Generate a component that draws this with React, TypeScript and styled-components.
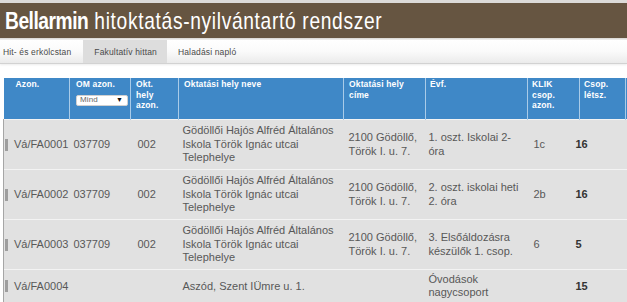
import React from "react";
import styled, { createGlobalStyle } from "styled-components";

const GlobalStyle = createGlobalStyle`
  html, body { margin: 0; padding: 0; background: #ffffff; }
  body { overflow: hidden; font-family: "Liberation Sans", Arial, sans-serif; }
`;

const Page = styled.div`
  width: 627px;
  height: 302px;
  overflow: hidden;
  background: #ffffff;
`;

const TopStrip = styled.div`
  height: 3px;
  background: #dcdad8;
`;

const TitleBar = styled.header`
  height: 35px;
  background: #665541;
  color: #ffffff;
  display: flex;
  align-items: center;
  padding-left: 5px;
  white-space: nowrap;
  font-family: "Liberation Sans", Arial, sans-serif;
`;

const TitleText = styled.h1`
  margin: 0;
  font-size: 24px;
  font-weight: normal;
  line-height: 35px;
  transform: scaleX(0.8);
  transform-origin: left center;
  white-space: pre;
`;

const TitleStrong = styled.span`
  font-weight: bold;
  letter-spacing: -0.58px;
`;

const TitleRest = styled.span`
  letter-spacing: 0.83px;
`;

const Shade = styled.div`
  height: 2px;
  background: linear-gradient(#d6d3cf, #f4f4f4);
`;

const TabBar = styled.nav`
  height: 23px;
  display: flex;
  background: linear-gradient(#ffffff, #fafafa 50%, #ebebeb);
  border-bottom: 1px solid #d2d2d2;
  box-shadow: 0 1px 2px rgba(0, 0, 0, 0.08);
`;

const Tab = styled.div<{ $active?: boolean; $first?: boolean }>`
  display: flex;
  align-items: center;
  padding: 0 ${(p) => (p.$first ? "12px" : "10px")} 0 ${(p) => (p.$first ? "3px" : "11px")};
  background: ${(p) => (p.$active ? "#dddddd" : "transparent")};
  color: #4a4a4a;
  font-size: 8.5px;
  letter-spacing: 0.15px;
  white-space: nowrap;
`;

const TableWrap = styled.div`
  margin: 14px 0 0 3px;
  width: 624px;
  overflow: hidden;
`;

const Grid = styled.table`
  border-collapse: collapse;
  table-layout: fixed;
  width: 704px;
`;

const Th = styled.th<{ $pl: number }>`
  background: #3f88c7;
  color: #ffffff;
  font-size: 8.5px;
  font-weight: bold;
  text-align: left;
  vertical-align: top;
  line-height: 10.5px;
  padding: 1px 4px 8px ${(p) => p.$pl}px;
  height: 32px;
  border-right: 1px solid #a9cbe8;
  letter-spacing: 0.15px;
`;

const HeadLabel = styled.div`
  margin-bottom: 5px;
`;

const Select = styled.div`
  width: 52px;
  height: 11px;
  background: #ffffff;
  border: 1px solid #d0d0d0;
  border-radius: 2px;
  display: flex;
  align-items: center;
  justify-content: space-between;
  padding: 0 4px 0 3px;
  box-sizing: border-box;
  color: #666666;
  font-weight: normal;
  font-size: 8px;
`;

const Arrow = styled.span`
  color: #111111;
  font-size: 7px;
`;

const Tr = styled.tr<{ $h: number }>`
  height: ${(p) => p.$h}px;
  background: #e1e1e1;
  border-top: 1px solid #f3f3f3;
`;

const Td = styled.td<{ $pl: number; $bold?: boolean; $first?: boolean; $shift?: number }>`
  font-size: 11px;
  line-height: 13.5px;
  color: ${(p) => (p.$bold ? "#333333" : "#585858")};
  font-weight: ${(p) => (p.$bold ? "bold" : "normal")};
  vertical-align: middle;
  padding: 2px 3px 2px ${(p) => p.$pl}px;
  text-indent: ${(p) => p.$shift ?? 0}px;
  border-left: ${(p) => (p.$first ? "1px solid #a6a6a6" : "none")};
`;

const IdCell = styled.div`
  display: flex;
  align-items: center;
  white-space: nowrap;
`;

const Marker = styled.span`
  width: 3px;
  height: 12px;
  background: #9e9e9e;
  margin-right: 6px;
  flex: none;
`;

const columns = [
  { w: 66, hp: 12, bp: 1 },
  { w: 61, hp: 6, bp: 4 },
  { w: 48, hp: 5, bp: 7 },
  { w: 165, hp: 5, bp: 4 },
  { w: 82, hp: 5, bp: 5 },
  { w: 102, hp: 4, bp: 3 },
  { w: 52, hp: 4, bp: 6 },
  { w: 46, hp: 4, bp: 0 },
  { w: 82, hp: 4, bp: 4 },
];

const rows = [
  {
    id: "Vá/FA0001",
    om: "037709",
    okt: "002",
    name: "Gödöllői Hajós Alfréd Általános Iskola Török Ignác utcai Telephelye",
    addr: "2100 Gödöllő, Török I. u. 7.",
    evf: "1. oszt. Iskolai 2-óra",
    klik: "1c",
    letsz: "16",
    h: 50,
  },
  {
    id: "Vá/FA0002",
    om: "037709",
    okt: "002",
    name: "Gödöllői Hajós Alfréd Általános Iskola Török Ignác utcai Telephelye",
    addr: "2100 Gödöllő, Török I. u. 7.",
    evf: "2. oszt. iskolai heti 2. óra",
    klik: "2b",
    letsz: "16",
    h: 50,
  },
  {
    id: "Vá/FA0003",
    om: "037709",
    okt: "002",
    name: "Gödöllői Hajós Alfréd Általános Iskola Török Ignác utcai Telephelye",
    addr: "2100 Gödöllő, Török I. u. 7.",
    evf: "3. Elsőáldozásra készülők 1. csop.",
    klik: "6",
    letsz: "5",
    h: 50,
  },
  {
    id: "Vá/FA0004",
    om: "",
    okt: "",
    name: "Aszód, Szent IÜmre u. 1.",
    addr: "",
    evf: "Óvodások nagycsoport",
    klik: "",
    letsz: "15",
    h: 33,
  },
];

export default function App() {
  return (
    <Page>
      <GlobalStyle />
      <TopStrip />
      <TitleBar>
        <TitleText>
          <TitleStrong>Bellarmin</TitleStrong>
          <TitleRest> hitoktatás-nyilvántartó rendszer</TitleRest>
        </TitleText>
      </TitleBar>
      <Shade />
      <TabBar>
        <Tab $first>Hit- és erkölcstan</Tab>
        <Tab $active>Fakultatív hittan</Tab>
        <Tab>Haladási napló</Tab>
      </TabBar>
      <TableWrap>
        <Grid>
          <colgroup>
            {columns.map((c, i) => (
              <col key={i} style={{ width: c.w }} />
            ))}
          </colgroup>
          <thead>
            <tr>
              <Th $pl={columns[0].hp}>Azon.</Th>
              <Th $pl={columns[1].hp}>
                <HeadLabel>OM azon.</HeadLabel>
                <Select>
                  <span>Mind</span>
                  <Arrow>▼</Arrow>
                </Select>
              </Th>
              <Th $pl={columns[2].hp}>
                Okt.
                <br />
                hely
                <br />
                azon.
              </Th>
              <Th $pl={columns[3].hp}>Oktatási hely neve</Th>
              <Th $pl={columns[4].hp}>
                Oktatási hely
                <br />
                címe
              </Th>
              <Th $pl={columns[5].hp}>Évf.</Th>
              <Th $pl={columns[6].hp}>
                KLIK
                <br />
                csop.
                <br />
                azon.
              </Th>
              <Th $pl={columns[7].hp}>
                Csop.
                <br />
                létsz.
              </Th>
              <Th $pl={columns[8].hp}></Th>
            </tr>
          </thead>
          <tbody>
            {rows.map((r) => (
              <Tr key={r.id} $h={r.h}>
                <Td $pl={columns[0].bp} $first>
                  <IdCell>
                    <Marker />
                    {r.id}
                  </IdCell>
                </Td>
                <Td $pl={columns[1].bp}>{r.om}</Td>
                <Td $pl={columns[2].bp}>{r.okt}</Td>
                <Td $pl={columns[3].bp}>{r.name}</Td>
                <Td $pl={columns[4].bp}>{r.addr}</Td>
                <Td $pl={columns[5].bp}>{r.evf}</Td>
                <Td $pl={columns[6].bp}>{r.klik}</Td>
                <Td $pl={columns[7].bp} $shift={-4} $bold>
                  {r.letsz}
                </Td>
                <Td $pl={columns[8].bp}></Td>
              </Tr>
            ))}
          </tbody>
        </Grid>
      </TableWrap>
    </Page>
  );
}
